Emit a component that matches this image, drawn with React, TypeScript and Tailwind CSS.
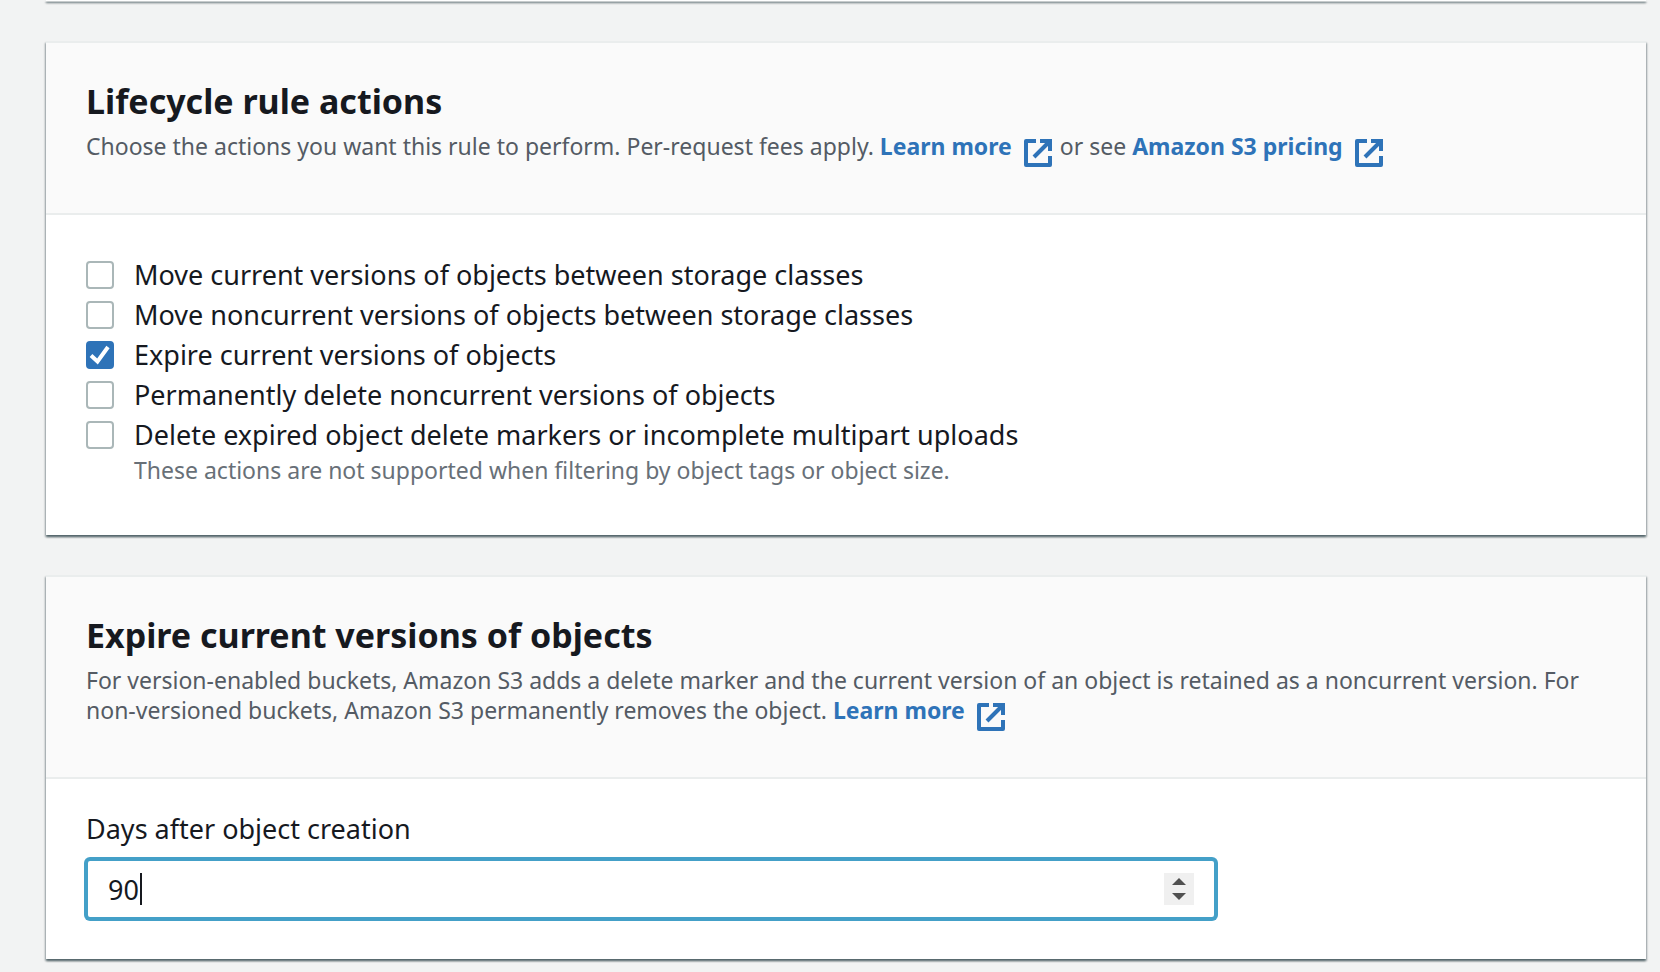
import { useState } from 'react';
import type { ReactNode } from 'react';

const ACTIONS: { id: string; label: string; hint?: string; initial?: boolean }[] = [
  { id: 'move-current', label: 'Move current versions of objects between storage classes' },
  { id: 'move-noncurrent', label: 'Move noncurrent versions of objects between storage classes' },
  { id: 'expire-current', label: 'Expire current versions of objects', initial: true },
  { id: 'delete-noncurrent', label: 'Permanently delete noncurrent versions of objects' },
  {
    id: 'delete-markers',
    label: 'Delete expired object delete markers or incomplete multipart uploads',
    hint: 'These actions are not supported when filtering by object tags or object size.',
  },
];

function ExternalLink({ children }: { children: ReactNode }) {
  return (
    <a href="#" className="font-bold text-[#2e73b8]">
      {children}
      <svg
        viewBox="0 0 28 28"
        aria-hidden="true"
        className="mr-[2px] ml-3 inline-block h-7 w-7 align-[-12px]"
        fill="none"
        stroke="currentColor"
        strokeWidth="4"
        strokeLinejoin="round"
      >
        <path d="M12 2H2v24h24V17" />
        <path d="M16 2h10v10" strokeLinejoin="miter" />
        <path d="M25.500 2.500L10 18" />
      </svg>
    </a>
  );
}

function Card({ title, description, children }: { title: string; description: ReactNode; children: ReactNode }) {
  return (
    <section className="border-t-2 border-[#eaeded] bg-white shadow-[0_2px_2px_0_rgba(0,28,36,0.4),1px_2px_2px_0_rgba(0,28,36,0.25),-1px_2px_2px_0_rgba(0,28,36,0.25)]">
      <header className="border-b-2 border-[#eaeded] bg-[#fafafa] px-10 pt-9 pb-[46px]">
        <h2 className="text-[34px] leading-[44px] font-bold">{title}</h2>
        <p className="mt-2 text-[23px] leading-[30px] text-[#545b64]">{description}</p>
      </header>
      {children}
    </section>
  );
}

function ActionOption({ id, label, hint, initial = false }: { id: string; label: string; hint?: string; initial?: boolean }) {
  const [checked, setChecked] = useState(initial);
  return (
    <div className="flex gap-5">
      <span className="relative my-[6px] h-7 w-7 shrink-0">
        <input
          id={id}
          type="checkbox"
          checked={checked}
          onChange={(e) => setChecked(e.target.checked)}
          className="block h-7 w-7 appearance-none rounded-[4px] border-2 border-[#aab7b8] bg-white checked:border-[#2e73b8] checked:bg-[#2e73b8]"
        />
        {checked && (
          <svg viewBox="0 0 28 28" aria-hidden="true" className="pointer-events-none absolute inset-0 h-7 w-7" fill="none" stroke="white" strokeWidth="4">
            <path d="M5 14.500L11.500 20.500L22 6" />
          </svg>
        )}
      </span>
      <div>
        <label htmlFor={id} className="block text-[27px] leading-[40px]">{label}</label>
        {hint && <p className="text-[23px] leading-[30px] text-[#687078]">{hint}</p>}
      </div>
    </div>
  );
}

function DaysField() {
  const [days, setDays] = useState(90);
  return (
    <div className="w-3/4 pr-[10px]">
      <label htmlFor="days" className="block text-[27px] leading-[40px]">Days after object creation</label>
      <div className="relative mt-[10px]">
        <input
          id="days"
          type="text"
          inputMode="numeric"
          value={days}
          onChange={(e) => setDays(Number(e.target.value) || 0)}
          className="block h-[60px] w-full rounded-[4px] border-2 border-[#44a0c8] bg-white px-5 text-[27px] text-[#16191f] caret-transparent shadow-[0_0_0_2px_#44a0c8] outline-none"
        />
        <span aria-hidden="true" className="absolute top-[14px] left-[54px] h-8 w-[2px] bg-[#16191f]" />
        <div className="absolute top-[14px] right-[22px] flex h-8 w-[30px] flex-col bg-[#f0f0f0] text-[#505050]">
          <button type="button" aria-label="Increase" onClick={() => setDays(days + 1)} className="flex flex-1 items-end justify-center pb-1">
            <svg viewBox="0 0 14 7" className="h-[7px] w-[14px]" fill="currentColor"><path d="M7 0L14 7H0z" /></svg>
          </button>
          <button type="button" aria-label="Decrease" onClick={() => setDays(days - 1)} className="flex flex-1 items-start justify-center pt-1">
            <svg viewBox="0 0 14 7" className="h-[7px] w-[14px]" fill="currentColor"><path d="M7 7L0 0H14z" /></svg>
          </button>
        </div>
      </div>
    </div>
  );
}

export default function App() {
  return (
    <main className="flex min-h-screen flex-col gap-10 bg-[#f2f3f3] pr-[14px] pl-[46px] font-['Noto_Sans',sans-serif] text-[#16191f]">
      <div className="h-px bg-white shadow-[0_2px_2px_0_rgba(0,28,36,0.4),1px_2px_2px_0_rgba(0,28,36,0.25),-1px_2px_2px_0_rgba(0,28,36,0.25)]" />
      <Card
        title="Lifecycle rule actions"
        description={
          <>
            Choose the actions you want this rule to perform. Per-request fees apply.{' '}
            <ExternalLink>Learn more</ExternalLink> or see <ExternalLink>Amazon S3 pricing</ExternalLink>
          </>
        }
      >
        <div className="px-10 pt-10 pb-[50px]">
          {ACTIONS.map((a) => (
            <ActionOption key={a.id} {...a} />
          ))}
        </div>
      </Card>
      <Card
        title="Expire current versions of objects"
        description={
          <>
            For version-enabled buckets, Amazon S3 adds a delete marker and the current version of an object is retained as a
            noncurrent version. For non-versioned buckets, Amazon S3 permanently removes the object.{' '}
            <ExternalLink>Learn more</ExternalLink>
          </>
        }
      >
        <div className="px-10 pt-[30px] pb-10">
          <DaysField />
        </div>
      </Card>
    </main>
  );
}
